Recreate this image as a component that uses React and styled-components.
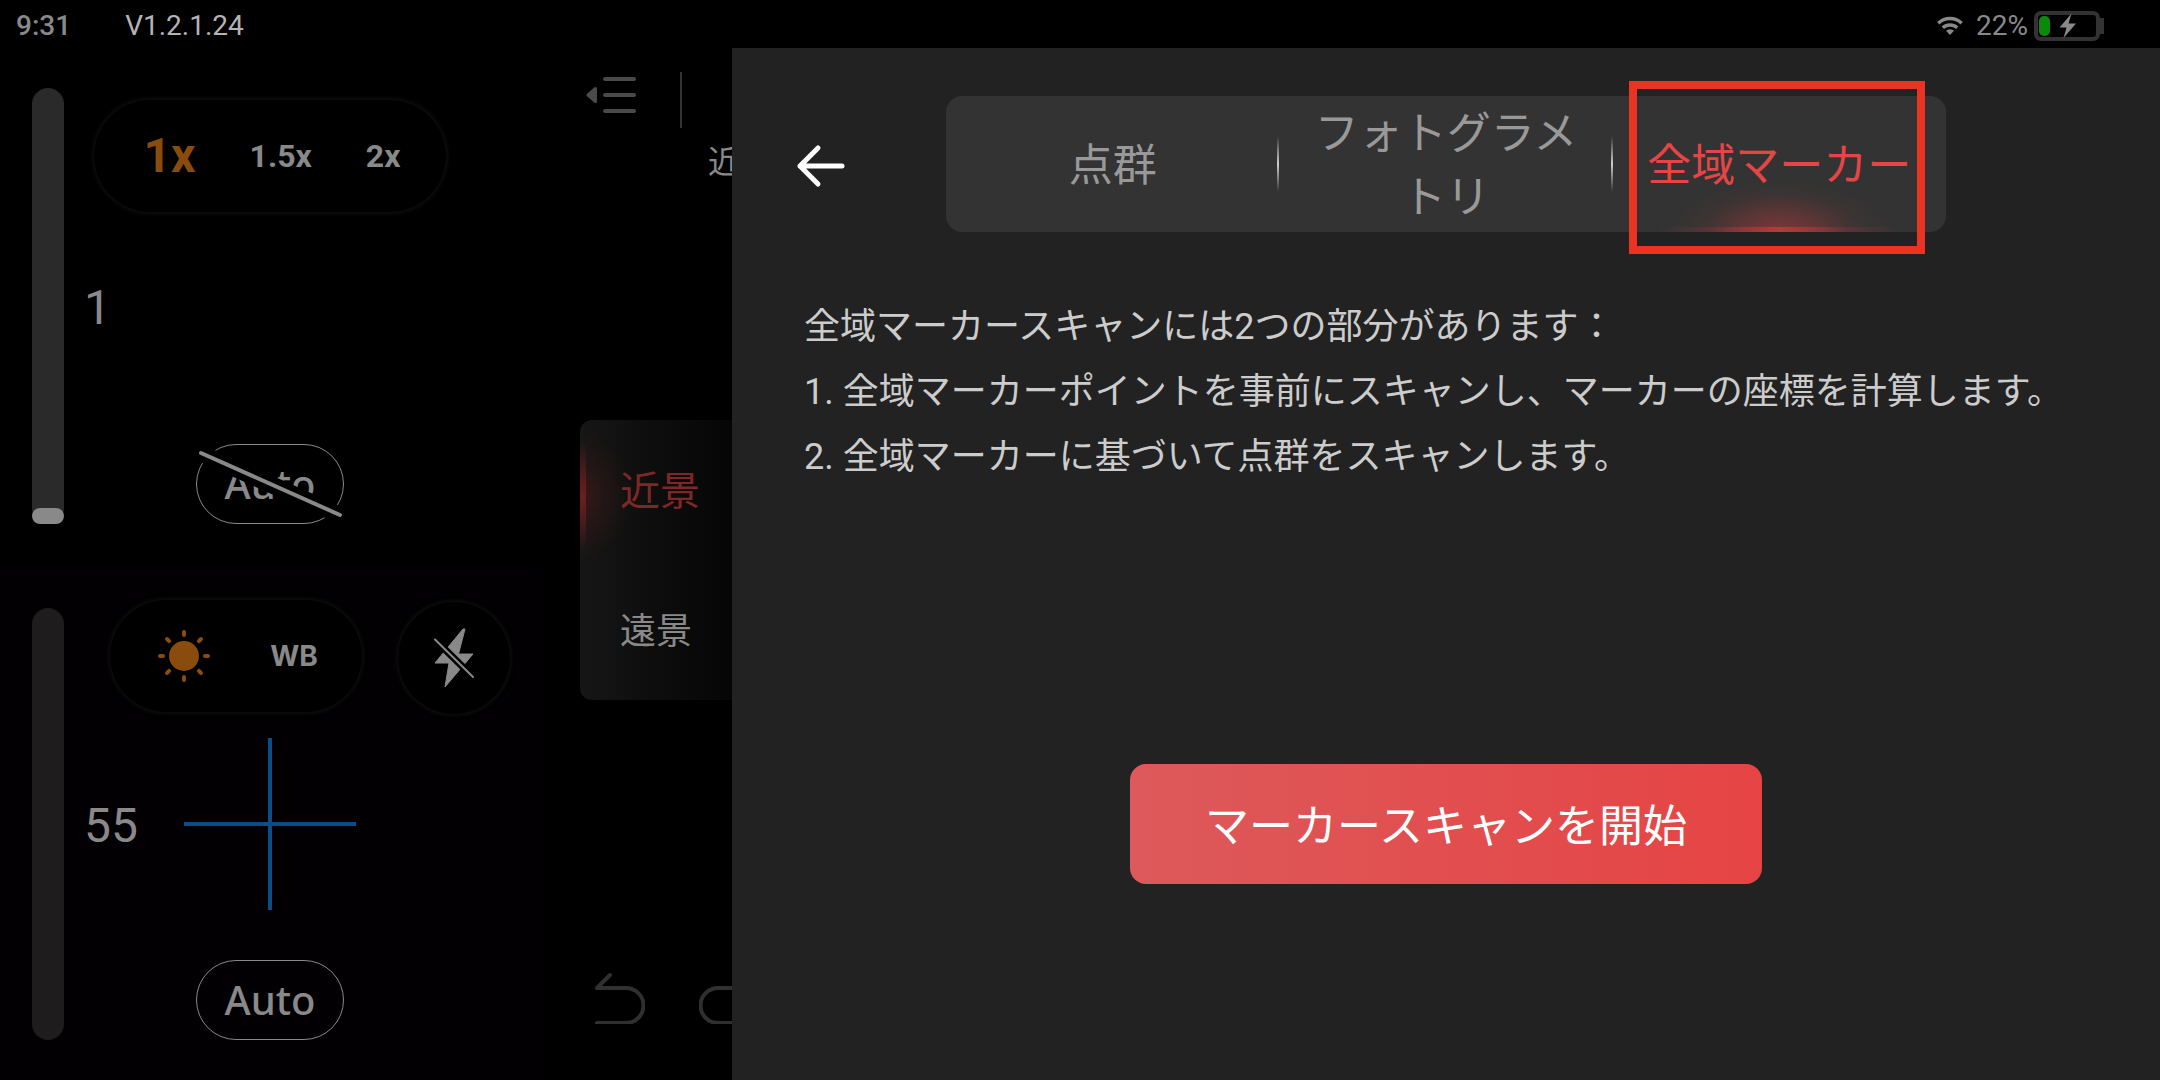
import React, { useState } from "react";
import styled, { createGlobalStyle, css } from "styled-components";

const GlobalStyle = createGlobalStyle`
  *, *::before, *::after { box-sizing: border-box; }
  body {
    margin: 0;
    background: #000;
    color: #898989;
    font-family: Roboto, "Noto Sans CJK JP", sans-serif;
  }
  button {
    margin: 0;
    padding: 0;
    border: 0;
    background: none;
    color: inherit;
    font: inherit;
    cursor: pointer;
  }
  svg { display: block; }
`;

const Page = styled.div`
  display: flex;
  flex-direction: column;
  min-height: 100vh;
`;

/* ---------- status bar ---------- */

const StatusBar = styled.header`
  display: flex;
  align-items: center;
  justify-content: space-between;
  height: 48px;
  padding: 4px 56px 0 16px;
  font-size: 28px;
  line-height: 32px;
`;

const StatusGroup = styled.div`
  display: flex;
  align-items: center;
  gap: ${(p) => p.$gap}px;
`;

const Clock = styled.span`
  font-weight: 500;
`;

const Version = styled.span`
  color: #b4b4b4;
`;

const Battery = styled.div`
  display: flex;
  align-items: center;
  gap: 6px;
`;

/* ---------- camera column ---------- */

const Body = styled.div`
  display: flex;
  flex: 1;
`;

const Cameras = styled.section`
  display: flex;
  flex-direction: column;
  flex: 0 0 25%;
`;

const CameraView = styled.div`
  display: grid;
  flex: 1 1 ${(p) => p.$height}px;
  padding: 32px 0 ${(p) => p.$bottom}px;
  background: ${(p) => p.$tint};

  > * {
    grid-area: 1 / 1;
  }
`;

const SliderField = styled.label`
  display: flex;
  align-items: center;
  gap: 20px;
  padding: 8px 0 0 32px;
  font-size: 48px;
  line-height: 56px;
`;

const SliderValue = styled.span`
  padding-top: 4px;
`;

const Slider = styled.input`
  appearance: none;
  writing-mode: vertical-lr;
  direction: rtl;
  align-self: stretch;
  width: 32px;
  margin: 0;
  border-radius: 16px;
  background: ${(p) => p.$track};

  &::-webkit-slider-thumb {
    appearance: none;
    width: 32px;
    height: 16px;
    border-radius: 8px;
    background: ${(p) => p.$thumb};
  }
`;

const Controls = styled.div`
  display: flex;
  flex-direction: column;
  align-items: center;
  justify-content: space-between;
  justify-self: center;
  width: 100%;
  padding-top: ${(p) => p.$top}px;
  pointer-events: none;

  button {
    pointer-events: auto;
  }
`;

const CrosshairBox = styled.div`
  place-self: center;
  padding-top: 8px;
`;

const ControlRow = styled.div`
  display: flex;
  align-items: flex-start;
  align-self: flex-end;
  gap: 36px;
  margin-right: 30px;
`;

const raised = css`
  height: 112px;
  border-radius: 56px;
  background: #000;
  box-shadow: 0 0 5px 1px #131313;
`;

const Pill = styled.div`
  ${raised}
  display: flex;
  align-items: center;
  justify-content: center;
  gap: ${(p) => p.$gap}px;
  width: ${(p) => p.$width}px;
  padding-left: 4px;
`;

const RoundButton = styled.button`
  ${raised}
  display: grid;
  place-items: center;
  width: 112px;
  && {
    margin-top: 2px;
  }
`;

const PillOption = styled.button`
  color: ${(p) => (p.$active ? "#8a4b0f" : "#898989")};
  font-size: ${(p) => (p.$active ? 48 : 32)}px;
  line-height: 56px;
  font-weight: 700;
`;

const WhiteBalance = styled.button`
  font-family: Inter, sans-serif;
  font-size: 28px;
  line-height: 32px;
  font-weight: 700;
`;

const AutoButton = styled.button`
  position: relative;
  width: 148px;
  height: 80px;
  border: 1px solid #898989;
  border-radius: 40px;
  font-family: "Noto Sans", sans-serif;
  font-size: 40px;
  line-height: 76px;
  font-weight: 500;

  svg {
    position: absolute;
    inset: -1px;
  }
`;

/* ---------- tool strip ---------- */

const Tools = styled.nav`
  display: grid;
  grid-template-rows: 1fr auto 1fr;
  flex: 0 0 192px;
  width: 192px;
  padding: 24px 0 32px 40px;
  overflow: hidden;
`;

const ToolsTop = styled.div`
  display: flex;
  align-items: flex-start;
  gap: 44px;
  height: 56px;
  padding-left: 6px;
`;

const Divider = styled.span`
  width: 2px;
  height: 56px;
  background: #333;
`;

const RangeLabel = styled.div`
  margin: 18px 0 0 128px;
  font-size: 32px;
  line-height: 32px;
  white-space: nowrap;
`;

const RangeCard = styled.div`
  display: grid;
  grid-template-rows: 140px 140px;
  border-radius: 12px 0 0 12px;
  background: linear-gradient(90deg, #161616, #0c0c0c 50%, #040404);
  overflow: hidden;
`;

const RangeOption = styled.button`
  padding: 4px 0 0 40px;
  text-align: left;
  white-space: nowrap;
  font-size: ${(p) => (p.$active ? 40 : 36)}px;
  line-height: 56px;
  color: ${(p) => (p.$active ? "#7d2727" : "#898989")};
  background: ${(p) =>
    p.$active
      ? `linear-gradient(180deg, transparent 16%, #6a1f20 55%, transparent 92%) left / 6px 100% no-repeat,
         radial-gradient(50px 64px at 0 76px, #3c1819, #30171799 45%, transparent)`
      : "none"};
`;

const History = styled.div`
  display: flex;
  align-self: end;
  gap: 54px;
  padding: 0 0 24px 15px;
`;

/* ---------- drawer ---------- */

const Drawer = styled.main`
  display: flex;
  flex: 1;
  flex-direction: column;
  min-width: 0;
  padding: 48px 64px 196px;
  background: #222;
`;

const DrawerHeader = styled.div`
  display: grid;
  grid-template-columns: 1fr minmax(0, 1000px) 1fr;
  align-items: center;
`;

const BackButton = styled.button`
  justify-self: start;
`;

const Tabs = styled.div`
  display: grid;
  grid-template-columns: repeat(3, 1fr);
  min-height: 136px;
  border-radius: 16px;
  background: #333;
`;

const Tab = styled.button`
  position: relative;
  padding: 4px 32px 0;
  font-size: 44px;
  line-height: 64px;
  color: ${(p) => (p.$active ? "#e64545" : "#999")};

  &:not(:first-child)::before {
    content: "";
    position: absolute;
    left: -2px;
    top: 40px;
    width: 2px;
    height: 56px;
    background: linear-gradient(180deg, transparent, #ccc, transparent);
  }

  ${(p) =>
    p.$active &&
    css`
      background:
        linear-gradient(90deg, transparent 13%, #7a373866 30%, #b8393a 50%, #7a373866 70%, transparent 87%)
          bottom / 100% 5px no-repeat,
        radial-gradient(108px 52px at 50% 100%, #783839, #6a3637cc 35%, #4a343466 72%, transparent);
    `}
`;

const Highlight = styled.span`
  position: absolute;
  inset: -15px 21px -22px 16px;
  border: 8px solid #ea3323;
  pointer-events: none;
`;

const Description = styled.div`
  margin-top: 63px;
  padding-left: 8px;
  color: #ccc;
  font-size: 36px;
  line-height: 65px;

  p {
    margin: 0;
  }
`;

const StartButton = styled.button`
  align-self: center;
  margin-top: auto;
  padding: 31px 75px 25px;
  border-radius: 16px;
  background: linear-gradient(90deg, #dd595b, #e64444);
  color: #fff;
  font-size: 44px;
  line-height: 64px;
  white-space: nowrap;
`;

/* ---------- icons ---------- */

const WifiIcon = () => (
  <svg width="26" height="20" viewBox="0 0 26 20" fill="none" stroke="#898989" strokeWidth="3.4">
    <path d="M1.3 7.2a17 17 0 0 1 23.4 0" />
    <path d="M5.8 11.8a10.6 10.6 0 0 1 14.4 0" />
    <path d="M13 19l-4-4.2a6 6 0 0 1 8 0z" fill="#898989" stroke="none" />
  </svg>
);

const BatteryIcon = () => (
  <svg width="70" height="30" viewBox="0 0 70 30">
    <rect x="2" y="2" width="62" height="26" rx="5" fill="none" stroke="#333" strokeWidth="4" />
    <rect x="66" y="7" width="4" height="16" fill="#333" />
    <rect x="5" y="5" width="11" height="20" rx="5" fill="#0a8a0a" />
    <path d="M37.5 2.5L25.5 16.5h7L29.5 27 42 12.500h-7.500z" fill="#898989" />
  </svg>
);

const SunIcon = () => (
  <svg width="52" height="52" viewBox="0 0 52 52">
    <circle cx="26" cy="26" r="15" fill="#8a4b0f" />
    {[0, 45, 90, 135, 180, 225, 270, 315].map((a) => (
      <path
        key={a}
        d="M26 2v3"
        stroke="#8a4b0f"
        strokeWidth="4"
        strokeLinecap="round"
        transform={`rotate(${a} 26 26)`}
      />
    ))}
  </svg>
);

const FlashOffIcon = () => (
  <svg width="40" height="60" viewBox="0 0 40 60">
    <path
      d="M29 1L1 35h14L11 59 39 26H24.500L31 1z"
      fill="#898989"
      stroke="#898989"
      strokeLinejoin="round"
    />
    <path d="M0 10.500L40 50" stroke="#000" strokeWidth="7" />
    <path d="M1 11.500L39 49" stroke="#898989" strokeWidth="2" strokeLinecap="round" />
  </svg>
);

const Crosshair = () => (
  <svg width="172" height="172" viewBox="0 0 172 172" stroke="#0b4d87" strokeWidth="4">
    <path d="M86 0v172M0 86h172" />
  </svg>
);

const StrikeLine = () => (
  <svg width="148" height="80" viewBox="0 0 148 80" strokeLinecap="round" overflow="visible">
    <path d="M0 7L148 73" stroke="#000" strokeWidth="17" />
    <path d="M5 9L144 71" stroke="#898989" strokeWidth="4" />
  </svg>
);

const CollapseIcon = () => (
  <svg width="50" height="46" viewBox="0 0 50 46" stroke="#4a4a4a" strokeLinecap="round">
    <path d="M2 23l7.500-6.500v13z" fill="#4a4a4a" strokeWidth="3" strokeLinejoin="round" />
    <path d="M19 7h29M19 23h29M19 39h29" strokeWidth="4" />
  </svg>
);

const HistoryIcon = ({ flip }) => (
  <svg width="50" height="52" viewBox="0 0 50 52">
    <path
      d="M15 3L2 16h29a17.500 17.500 0 0 1 0 35H2"
      transform={flip ? "matrix(-1 0 0 1 50 0)" : undefined}
      fill="none"
      stroke="#303030"
      strokeWidth="4"
      strokeLinecap="round"
      strokeLinejoin="round"
    />
  </svg>
);

const BackIcon = () => (
  <svg width="50" height="48" viewBox="0 0 50 48">
    <path
      d="M22 8L4 26l18 18M4 26h42"
      fill="none"
      stroke="#fff"
      strokeWidth="5"
      strokeLinecap="round"
      strokeLinejoin="round"
    />
  </svg>
);

/* ---------- app ---------- */

const zooms = ["1x", "1.5x", "2x"];
const ranges = ["近景", "遠景"];
const modes = ["点群", "フォトグラメトリ", "全域マーカー"];

export default function App() {
  const [zoom, setZoom] = useState("1x");
  const [range, setRange] = useState("近景");
  const [mode, setMode] = useState("全域マーカー");
  const [exposure, setExposure] = useState(1);
  const [light, setLight] = useState(55);

  return (
    <Page lang="ja">
      <GlobalStyle />
      <StatusBar>
        <StatusGroup $gap={54}>
          <Clock>9:31</Clock>
          <Version>V1.2.1.24</Version>
        </StatusGroup>
        <StatusGroup $gap={13}>
          <WifiIcon />
          <Battery>
            <span>22%</span>
            <BatteryIcon />
          </Battery>
        </StatusGroup>
      </StatusBar>

      <Body>
        <Cameras>
          <CameraView $height={520} $bottom={44} $tint="#000">
            <SliderField>
              <Slider
                type="range"
                min="1"
                max="100"
                value={exposure}
                onChange={(e) => setExposure(Number(e.target.value))}
                $track="#2a2a2a"
                $thumb="#898989"
              />
              <SliderValue>{exposure}</SliderValue>
            </SliderField>
            <Controls $top={20}>
              <Pill $width={352} $gap={54}>
                {zooms.map((z) => (
                  <PillOption key={z} $active={z === zoom} onClick={() => setZoom(z)}>
                    {z}
                  </PillOption>
                ))}
              </Pill>
              <AutoButton>
                Auto
                <StrikeLine />
              </AutoButton>
            </Controls>
          </CameraView>

          <CameraView $height={512} $bottom={40} $tint="#020002">
            <SliderField>
              <Slider
                type="range"
                min="1"
                max="100"
                value={light}
                onChange={(e) => setLight(Number(e.target.value))}
                $track="#1e1c1d"
                $thumb="transparent"
              />
              <SliderValue>{light}</SliderValue>
            </SliderField>
            <CrosshairBox>
              <Crosshair />
            </CrosshairBox>
            <Controls $top={0}>
              <ControlRow>
                <Pill $width={252} $gap={60}>
                  <button aria-label="Brightness">
                    <SunIcon />
                  </button>
                  <WhiteBalance>WB</WhiteBalance>
                </Pill>
                <RoundButton aria-label="Flash">
                  <FlashOffIcon />
                </RoundButton>
              </ControlRow>
              <AutoButton>Auto</AutoButton>
            </Controls>
          </CameraView>
        </Cameras>

        <Tools>
          <div>
            <ToolsTop>
              <button aria-label="Collapse">
                <CollapseIcon />
              </button>
              <Divider />
            </ToolsTop>
            <RangeLabel>近</RangeLabel>
          </div>
          <RangeCard>
            {ranges.map((r) => (
              <RangeOption key={r} $active={r === range} onClick={() => setRange(r)}>
                {r}
              </RangeOption>
            ))}
          </RangeCard>
          <History>
            <button aria-label="Undo">
              <HistoryIcon />
            </button>
            <button aria-label="Redo">
              <HistoryIcon flip />
            </button>
          </History>
        </Tools>

        <Drawer>
          <DrawerHeader>
            <BackButton aria-label="Back">
              <BackIcon />
            </BackButton>
            <Tabs role="tablist">
              {modes.map((m) => (
                <Tab
                  key={m}
                  role="tab"
                  aria-selected={m === mode}
                  $active={m === mode}
                  onClick={() => setMode(m)}
                >
                  {m}
                  {m === mode && <Highlight />}
                </Tab>
              ))}
            </Tabs>
          </DrawerHeader>
          <Description>
            <p>全域マーカースキャンには2つの部分があります：</p>
            <p>1. 全域マーカーポイントを事前にスキャンし、マーカーの座標を計算します。</p>
            <p>2. 全域マーカーに基づいて点群をスキャンします。</p>
          </Description>
          <StartButton>マーカースキャンを開始</StartButton>
        </Drawer>
      </Body>
    </Page>
  );
}
